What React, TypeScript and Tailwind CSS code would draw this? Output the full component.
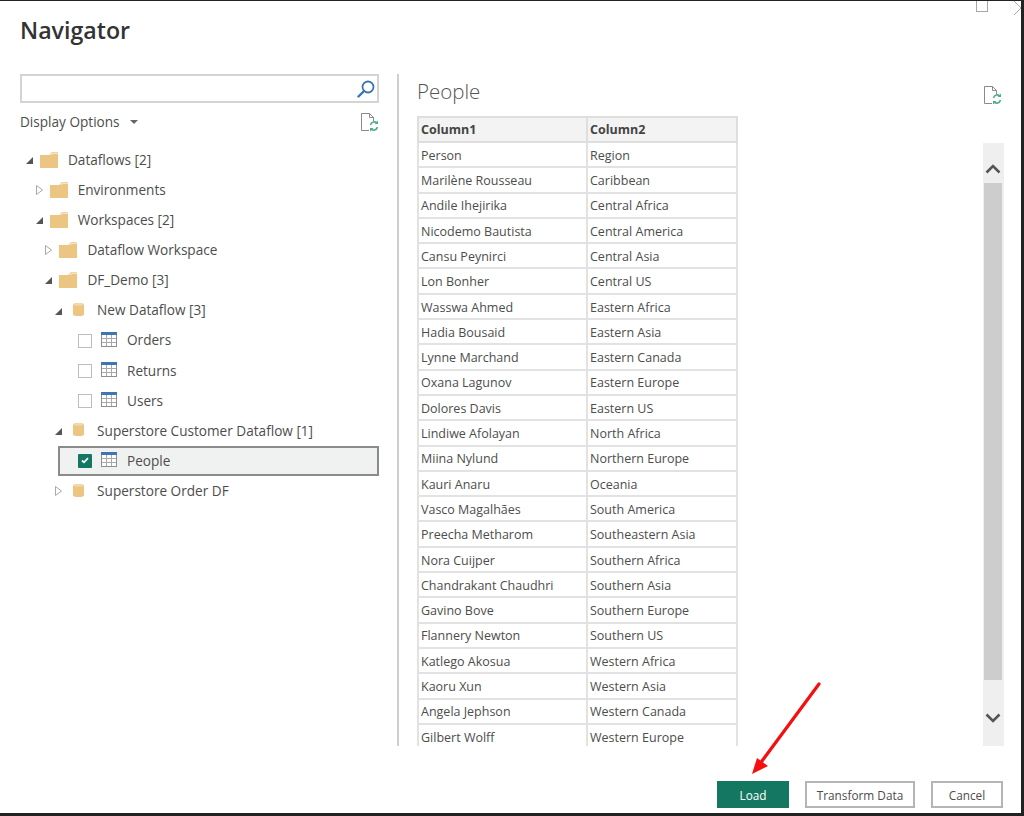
const rows = [
  ["Person", "Region"],
  ["Marilène Rousseau", "Caribbean"],
  ["Andile Ihejirika", "Central Africa"],
  ["Nicodemo Bautista", "Central America"],
  ["Cansu Peynirci", "Central Asia"],
  ["Lon Bonher", "Central US"],
  ["Wasswa Ahmed", "Eastern Africa"],
  ["Hadia Bousaid", "Eastern Asia"],
  ["Lynne Marchand", "Eastern Canada"],
  ["Oxana Lagunov", "Eastern Europe"],
  ["Dolores Davis", "Eastern US"],
  ["Lindiwe Afolayan", "North Africa"],
  ["Miina Nylund", "Northern Europe"],
  ["Kauri Anaru", "Oceania"],
  ["Vasco Magalhães", "South America"],
  ["Preecha Metharom", "Southeastern Asia"],
  ["Nora Cuijper", "Southern Africa"],
  ["Chandrakant Chaudhri", "Southern Asia"],
  ["Gavino Bove", "Southern Europe"],
  ["Flannery Newton", "Southern US"],
  ["Katlego Akosua", "Western Africa"],
  ["Kaoru Xun", "Western Asia"],
  ["Angela Jephson", "Western Canada"],
  ["Gilbert Wolff", "Western Europe"],
]

function Caret({ open }: { open?: boolean }) {
  return (
    <svg width="9" height="12" viewBox="0 0 9 12" className="shrink-0">
      {open ? (
        <path d="M8 3v7H1z" fill="#555" />
      ) : (
        <path d="M1.500 1.500 7.500 6l-6 4.500z" fill="#fff" stroke="#a8a8a8" />
      )}
    </svg>
  )
}

function Folder() {
  return (
    <svg width="18" height="17" viewBox="0 0 18 17" className="shrink-0">
      <path d="M0 4h9l3-3h6v16H0z" fill="#ecc583" />
      <path d="M9.500 4 12.500 1.500H18V3h-5l-1.500 1z" fill="#f6e3c2" />
    </svg>
  )
}

function Cylinder() {
  return (
    <svg width="11" height="15" viewBox="0 0 11 15" className="shrink-0">
      <path d="M0 2.500C0 .8 11 .8 11 2.500v10C11 14.500 0 14.500 0 12.500z" fill="#ecc583" />
      <ellipse cx="5.500" cy="2.200" rx="5" ry="1.500" fill="#f3d7a8" />
    </svg>
  )
}

function TableIcon() {
  return (
    <svg width="16" height="15" viewBox="0 0 16 15" className="shrink-0">
      <rect x="0.500" y="1" width="15" height="13.500" fill="#fff" stroke="#8f8f8f" />
      <path d="M5.500 3v11M10.500 3v11M1 6.500h14M1 10.500h14" stroke="#a9a9a9" />
      <rect x="0" y="0" width="16" height="3" fill="#3f75b5" />
    </svg>
  )
}

function RefreshDoc() {
  return (
    <svg width="19" height="19" viewBox="0 0 19 19" className="shrink-0">
      <path d="M9 17.500H1.500V.5h8l4 4v4" fill="none" stroke="#8a8a8a" />
      <path d="M9.500.5v4h4" fill="none" stroke="#8a8a8a" />
      <path d="M10.500 12a4 4 0 0 1 6.800-1.800M17.500 14a4 4 0 0 1-6.800 1.800" fill="none" stroke="#4fae8b" strokeWidth="1.600" />
      <path d="M18 7.500v3.500h-3.500zM10 18.500V15h3.500z" fill="#4fae8b" />
    </svg>
  )
}

function SearchGlass() {
  return (
    <svg width="18" height="18" viewBox="0 0 18 18" className="shrink-0">
      <circle cx="11" cy="7" r="5.500" fill="none" stroke="#3a75b0" strokeWidth="1.800" />
      <path d="M7 11 1.500 16.500" fill="none" stroke="#3a75b0" strokeWidth="2.400" strokeLinecap="round" />
    </svg>
  )
}

function Checkbox({ checked }: { checked?: boolean }) {
  if (checked) {
    return (
      <span className="flex h-[14px] w-[14px] shrink-0 items-center justify-center rounded-[1px] bg-[#147762]">
        <svg width="8" height="7" viewBox="0 0 8 7">
          <path d="M1 3.500 3 5.300 7 1.200" fill="none" stroke="#fff" strokeWidth="1.700" />
        </svg>
      </span>
    )
  }
  return <span className="h-[14px] w-[14px] shrink-0 border border-[#bdbdbd] bg-white" />
}

function Node({ level, open, icon, label }: { level: number; open?: boolean; icon: "folder" | "db"; label: string }) {
  const indent = 25 + level * 9.7
  return (
    <div className="flex h-[30.100px] items-center" style={{ paddingLeft: indent }}>
      <Caret open={open} />
      <span className="ml-[6px] flex w-[18px] -translate-y-[1px] justify-center">
        {icon === "folder" ? <Folder /> : <Cylinder />}
      </span>
      <span className="ml-[10px] whitespace-nowrap">{label}</span>
    </div>
  )
}

function Leaf({ label, checked }: { label: string; checked?: boolean }) {
  return (
    <div className={checked ? "ml-[58px] mr-[18px] flex h-[30.100px] items-center border-2 border-[#8b8b8b] bg-[#f0f2f1] pl-[18px]" : "flex h-[30.100px] items-center pl-[78px]"}>
      <Checkbox checked={checked} />
      <span className="ml-[9px] -translate-y-[1px]">
        <TableIcon />
      </span>
      <span className="ml-[10px]">{label}</span>
    </div>
  )
}

export default function App() {
  return (
    <div className="relative flex h-[816px] w-[1024px] flex-col overflow-hidden border-t border-r-[3px] border-b-[3px] border-[#222] bg-white font-['Open_Sans',sans-serif] text-[#4d4d4d]">
      {/* window buttons, cut off by the top of the capture */}
      <div className="absolute left-[976px] top-[-4px] h-[15px] w-[12px] border border-[#a8a8a8]" />
      <svg width="9" height="14" viewBox="0 0 9 14" className="absolute left-[1013px] top-0">
        <path d="M1 0 8 7 1 14" fill="none" stroke="#a8a8a8" />
      </svg>

      <h1 className="ml-5 h-[73px] shrink-0 pt-[11px] text-[23.200px] font-semibold leading-9 text-[#333]">Navigator</h1>

      <div className="flex h-[672px] shrink-0">
        {/* left pane */}
        <div className="w-[399px] shrink-0 border-r-2 border-[#cfcfcf] text-[13.600px]">
          <div className="ml-5 mr-[18px] flex h-[29px] items-center justify-end border-2 border-[#d4d4d4] pr-[2px]">
            <SearchGlass />
          </div>
          <div className="ml-5 mr-[18px] mt-[8px] flex h-[22px] items-center justify-between">
            <div className="flex items-center">
              <span>Display Options</span>
              <span className="ml-[10px] h-0 w-0 border-x-4 border-t-4 border-x-transparent border-t-[#666]" />
            </div>
            <RefreshDoc />
          </div>
          <div className="mt-[12px]">
            <Node level={0} open icon="folder" label="Dataflows [2]" />
            <Node level={1} icon="folder" label="Environments" />
            <Node level={1} open icon="folder" label="Workspaces [2]" />
            <Node level={2} icon="folder" label="Dataflow Workspace" />
            <Node level={2} open icon="folder" label="DF_Demo [3]" />
            <Node level={3} open icon="db" label="New Dataflow [3]" />
            <Leaf label="Orders" />
            <Leaf label="Returns" />
            <Leaf label="Users" />
            <Node level={3} open icon="db" label="Superstore Customer Dataflow [1]" />
            <Leaf label="People" checked />
            <Node level={3} icon="db" label="Superstore Order DF" />
          </div>
        </div>

        {/* preview pane */}
        <div className="flex min-w-0 flex-1 pl-[18px] pr-[17px]">
          <div className="flex w-[321px] shrink-0 flex-col overflow-hidden">
            <div className="h-[42px] shrink-0 pt-[2px] text-[20.500px] font-light leading-[30px] text-[#555]">People</div>
            <div className="shrink-0 text-[12.500px]">
              <div className="flex h-[27px] items-center border-2 border-[#dedede] bg-[#f3f3f3] font-bold text-[#444]">
                <span className="w-[167px] pl-[2px] pt-[1px]">Column1</span>
                <span className="flex h-full items-center border-l-2 border-[#dedede] pl-[2px] pt-[1px]">Column2</span>
              </div>
              {rows.map(([name, region]) => (
                <div key={name} className="flex h-[25.300px] items-center border-x-2 border-b-2 border-[#e2e2e2]">
                  <span className="w-[167px] whitespace-nowrap pl-[2px] pt-[3px]">{name}</span>
                  <span className="flex h-full items-center whitespace-nowrap border-l-2 border-[#e2e2e2] pl-[2px] pt-[3px]">{region}</span>
                </div>
              ))}
            </div>
          </div>
          <div className="ml-auto flex w-[21px] shrink-0 flex-col items-center">
            <div className="mt-[12px] h-[57px] self-end pr-[2px]">
              <RefreshDoc />
            </div>
            <div className="flex h-[603px] w-[21px] flex-col items-center bg-[#efefef] pr-[1px]">
              <svg width="16" height="10" viewBox="0 0 16 10" className="mt-[21px] shrink-0">
                <path d="M1.500 8.500 8 2l6.500 6.500" fill="none" stroke="#555" strokeWidth="2.600" />
              </svg>
              <div className="mt-[9px] h-[497px] w-[18px] shrink-0 bg-[#cdcdcd]" />
              <svg width="16" height="10" viewBox="0 0 16 10" className="mt-[33px] shrink-0">
                <path d="M1.500 1.500 8 8l6.500-6.500" fill="none" stroke="#555" strokeWidth="2.600" />
              </svg>
            </div>
          </div>
        </div>
      </div>

      {/* footer buttons */}
      <div className="mr-[18px] mt-[35px] flex justify-end gap-4 text-[11.800px]">
        <button className="h-[27px] w-[72px] bg-[#147762] pt-[2px] text-white">Load</button>
        <button className="h-[27px] w-[110px] border-2 border-[#b5b5b5] bg-white pt-[2px]">Transform Data</button>
        <button className="h-[27px] w-[72px] border-2 border-[#b5b5b5] bg-white pt-[2px]">Cancel</button>
      </div>

      {/* red arrow drawn over the screenshot */}
      <svg width="80" height="100" viewBox="0 0 80 100" className="absolute left-[748px] top-[680px]">
        <path d="M71 3 14 80" fill="none" stroke="#f50f0f" strokeWidth="3.200" strokeLinecap="round" />
        <path d="M4 93 9 77 20 85z" fill="#f50f0f" />
      </svg>
    </div>
  )
}
